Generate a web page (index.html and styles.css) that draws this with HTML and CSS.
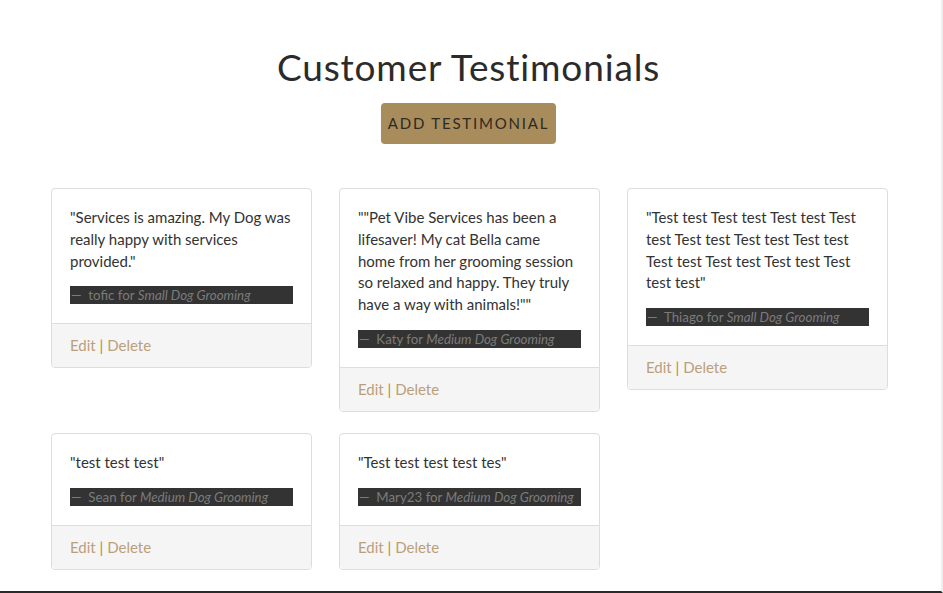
FILE: index.html
```html
<!DOCTYPE html>
<html>
<head>
<meta charset="utf-8">
<link rel="stylesheet" href="styles.css">
</head>
<body>
<div class="page">
  <header class="head">
    <h1 class="title">Customer Testimonials</h1>
    <a class="btn" href="#">ADD TESTIMONIAL</a>
  </header>
  <div class="grid">
    <div class="card">
      <div class="card-body">
        <p class="quote">"Services is amazing. My Dog was really happy with services provided."</p>
        <div class="by">— &nbsp;tofic for <em>Small Dog Grooming</em></div>
      </div>
      <div class="card-foot"><a href="#">Edit</a> <span class="sep">|</span> <a href="#">Delete</a></div>
    </div>
    <div class="card">
      <div class="card-body">
        <p class="quote">""Pet Vibe Services has been a lifesaver! My cat Bella came home from her grooming session so relaxed and happy. They truly have a way with animals!""</p>
        <div class="by">— &nbsp;Katy for <em>Medium Dog Grooming</em></div>
      </div>
      <div class="card-foot"><a href="#">Edit</a> <span class="sep">|</span> <a href="#">Delete</a></div>
    </div>
    <div class="card">
      <div class="card-body">
        <p class="quote">"Test test Test test Test test Test test Test test Test test Test test Test test Test test Test test Test test test"</p>
        <div class="by">— &nbsp;Thiago for <em>Small Dog Grooming</em></div>
      </div>
      <div class="card-foot"><a href="#">Edit</a> <span class="sep">|</span> <a href="#">Delete</a></div>
    </div>
    <div class="card">
      <div class="card-body">
        <p class="quote">"test test test"</p>
        <div class="by">— &nbsp;Sean for <em>Medium Dog Grooming</em></div>
      </div>
      <div class="card-foot"><a href="#">Edit</a> <span class="sep">|</span> <a href="#">Delete</a></div>
    </div>
    <div class="card">
      <div class="card-body">
        <p class="quote">"Test test test test tes"</p>
        <div class="by">— &nbsp;Mary23 for <em>Medium Dog Grooming</em></div>
      </div>
      <div class="card-foot"><a href="#">Edit</a> <span class="sep">|</span> <a href="#">Delete</a></div>
    </div>
  </div>
</div>
</body>
</html>
```
FILE: styles.css
```css
* { box-sizing: border-box; }
html, body { margin: 0; padding: 0; background: #fff; }
body {
  font-family: "Lato", "Open Sans", sans-serif;
  color: #333;
  overflow: hidden;
}
.page {
  width: 943px;
  height: 593px;
  border-right: 2px solid #eeeeee;
  border-bottom: 2px solid #2a2a2a;
}
.head {
  display: flex;
  flex-direction: column;
  align-items: center;
  padding-top: 44px;
  padding-right: 4px;
}
.title {
  margin: 0;
  font-size: 37px;
  font-weight: 400;
  line-height: 46px;
  color: #2b2b2b;
  letter-spacing: 0.85px;
}
.btn {
  margin-top: 13px;
  display: block;
  width: 175px;
  height: 41px;
  line-height: 41px;
  text-align: center;
  background: #a88c5b;
  border-radius: 4px;
  color: #2e2a24;
  font-size: 15px;
  letter-spacing: 1.8px;
  text-decoration: none;
}
.grid {
  margin-top: 44px;
  padding-left: 51px;
  display: grid;
  grid-template-columns: repeat(3, 261px);
  column-gap: 27px;
  row-gap: 21px;
  align-items: start;
}
.card {
  border: 1px solid #dddddd;
  border-radius: 4px;
  background: #fff;
  overflow: hidden;
}
.card-body {
  padding: 18px 18px 19px;
}
.quote {
  margin: 0 0 14px;
  font-size: 15px;
  line-height: 21.75px;
  color: #333;
}
.by {
  background: #333333;
  color: #7b7b7b;
  font-size: 13.3px;
  line-height: 18px;
  height: 18px;
  padding-left: 1px;
  white-space: nowrap;
  overflow: hidden;
}
.by em { font-style: italic; }
.card-foot {
  background: #f5f5f5;
  border-top: 1px solid #dddddd;
  padding: 11px 18px 11px;
  font-size: 15px;
  line-height: 21px;
}
.card-foot a {
  color: #bb9f7b;
  text-decoration: none;
}
.sep { color: #c4823a; }
```
